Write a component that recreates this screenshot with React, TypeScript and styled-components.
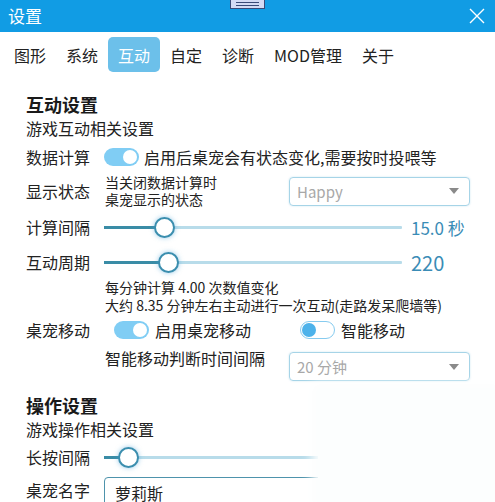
import React from "react";
import styled, { createGlobalStyle } from "styled-components";

const Global = createGlobalStyle`
  html, body { margin: 0; padding: 0; background: #fff; }
  body { font-family: "Noto Sans CJK SC", "Noto Sans", sans-serif; color: #222; }
  * { box-sizing: border-box; }
`;

const Window = styled.div`
  position: relative;
  width: 495px;
  height: 502px;
  overflow: hidden;
  background: #fff;
`;

const TitleBar = styled.div`
  position: relative;
  height: 32px;
  background: #119ce4;
  display: flex;
  align-items: center;
  justify-content: space-between;
  padding: 0 10px 0 8px;
`;

const Title = styled.div`
  color: #fff;
  font-size: 17px;
  line-height: 20px;
`;

const DragHandle = styled.div`
  position: absolute;
  left: 230px;
  top: -1px;
  width: 35px;
  height: 10px;
  background: #d4daf4;
  border: 1px solid #3b4a78;
  display: flex;
  flex-direction: column;
  justify-content: center;
  gap: 2px;
  padding: 0 5px;
  &::before, &::after {
    content: "";
    display: block;
    height: 1px;
    background: #3b4a78;
  }
`;

const TabBar = styled.div`
  height: 44px;
  display: flex;
  align-items: flex-start;
  padding: 5px 0 0 4px;
`;

const Tab = styled.div<{ $active?: boolean }>`
  height: 35px;
  padding: 0 10px;
  display: flex;
  align-items: center;
  font-size: 16px;
  border-radius: 5px;
  color: ${(p) => (p.$active ? "#fff" : "#222")};
  background: ${(p) => (p.$active ? "#6cc0ea" : "transparent")};
`;

const Content = styled.div`
  padding: 0 25px 0 26px;
  display: flex;
  flex-direction: column;
`;

const Heading = styled.div<{ $mt: number }>`
  margin-top: ${(p) => p.$mt}px;
  font-size: 18px;
  line-height: 24px;
  font-weight: 700;
  color: #1a1a1a;
`;

const SubHeading = styled.div`
  font-size: 16px;
  line-height: 24px;
  color: #222;
`;

const Row = styled.div<{ $h: number; $top?: boolean }>`
  height: ${(p) => p.$h}px;
  display: flex;
  align-items: ${(p) => (p.$top ? "flex-start" : "center")};
`;

const Label = styled.div`
  width: 78px;
  flex: none;
  font-size: 16px;
  line-height: 24px;
`;

const Text = styled.span<{ $ml?: number }>`
  margin-left: ${(p) => p.$ml ?? 5}px;
  font-size: 16px;
  line-height: 24px;
  white-space: nowrap;
`;

const Desc = styled.div<{ $ml?: number }>`
  margin-left: ${(p) => p.$ml ?? 1}px;
  font-size: 14px;
  line-height: 17px;
  white-space: nowrap;
`;

const Info = styled.div`
  margin-left: 79px;
  font-size: 14px;
  line-height: 18px;
  white-space: nowrap;
`;

const ToggleTrack = styled.div<{ $on: boolean; $ml?: number }>`
  position: relative;
  margin-left: ${(p) => p.$ml ?? 0}px;
  width: 35px;
  height: 18px;
  flex: none;
  border-radius: 9px;
  background: ${(p) => (p.$on ? "#80cdf4" : "#fff")};
  border: ${(p) => (p.$on ? "none" : "1.5px solid #86cbef")};
`;

const ToggleKnob = styled.div<{ $on: boolean }>`
  position: absolute;
  top: 50%;
  transform: translateY(-50%);
  width: 14px;
  height: 14px;
  border-radius: 50%;
  ${(p) => (p.$on ? "right: 2px; background: #fff;" : "left: 1px; background: #4db2ea;")}
`;

const Toggle = ({ on, ml }: { on: boolean; ml?: number }) => (
  <ToggleTrack $on={on} $ml={ml}>
    <ToggleKnob $on={on} />
  </ToggleTrack>
);

const SelectBox = styled.div<{ $mt?: number }>`
  margin-left: auto;
  margin-top: ${(p) => p.$mt ?? 0}px;
  width: 181px;
  height: 29px;
  flex: none;
  border: 1.5px solid #a6d4e7;
  border-radius: 4px;
  box-shadow: 0 0 2px rgba(120, 190, 220, 0.4);
  display: flex;
  align-items: center;
  justify-content: space-between;
  padding: 0 10px 0 7px;
  font-size: 15px;
  color: #a8a8a8;
`;

const Caret = styled.div`
  width: 0;
  height: 0;
  border-left: 5px solid transparent;
  border-right: 5px solid transparent;
  border-top: 6px solid #8a8a8a;
`;

const SliderWrap = styled.div<{ $w: number }>`
  position: relative;
  width: ${(p) => p.$w}px;
  height: 24px;
  flex: none;
`;

const TrackBase = styled.div`
  position: absolute;
  left: 0;
  right: 0;
  top: 11px;
  height: 2.5px;
  background: #b8dcea;
  border-radius: 1px;
`;

const TrackFill = styled.div`
  position: absolute;
  left: 0;
  top: 11px;
  height: 2.5px;
  background: #3a8ca6;
`;

const Thumb = styled.div`
  position: absolute;
  top: 2px;
  width: 21px;
  height: 21px;
  margin-left: -10.5px;
  border-radius: 50%;
  background: #fff;
  border: 2.5px solid #3b8eae;
  box-shadow: 0 0 5px rgba(70, 160, 215, 0.55);
`;

const Value = styled.span<{ $size: number }>`
  margin-left: 9px;
  font-size: ${(p) => p.$size}px;
  color: #3a8cb6;
  white-space: nowrap;
`;

const Slider = ({ pos, width }: { pos: number; width: number }) => (
  <SliderWrap $w={width}>
    <TrackBase />
    <TrackFill style={{ width: pos }} />
    <Thumb style={{ left: pos }} />
  </SliderWrap>
);

const InputBox = styled.div`
  margin-top: 4px;
  width: 260px;
  height: 32px;
  flex: none;
  border: 1.5px solid #4e93ac;
  border-radius: 4px;
  display: flex;
  align-items: center;
  padding-left: 10px;
  font-size: 16px;
`;

const Cover = styled.div`
  position: absolute;
  left: 318px;
  top: 390px;
  right: 0;
  bottom: 0;
  background: #fcfefe;
  box-shadow: 0 0 10px 6px #fcfefe;
`;

export default function App() {
  const tabs = ["图形", "系统", "互动", "自定", "诊断", "MOD管理", "关于"];
  return (
    <Window>
      <Global />
      <TitleBar>
        <Title>设置</Title>
        <svg width="16" height="16" viewBox="0 0 16 16">
          <path d="M1 1 L15 15 M15 1 L1 15" stroke="#fff" strokeWidth="1.4" fill="none" />
        </svg>
        <DragHandle />
      </TitleBar>
      <TabBar>
        {tabs.map((t) => (
          <Tab key={t} $active={t === "互动"}>
            {t}
          </Tab>
        ))}
      </TabBar>
      <Content>
        <Heading $mt={16}>互动设置</Heading>
        <SubHeading>游戏互动相关设置</SubHeading>
        <Row $h={34}>
          <Label>数据计算</Label>
          <Toggle on />
          <Text>启用后桌宠会有状态变化,需要按时投喂等</Text>
        </Row>
        <Row $h={34}>
          <Label>显示状态</Label>
          <Desc>
            当关闭数据计算时
            <br />
            桌宠显示的状态
          </Desc>
          <SelectBox>
            Happy
            <Caret />
          </SelectBox>
        </Row>
        <Row $h={38}>
          <Label>计算间隔</Label>
          <Slider pos={60} width={298} />
          <Value $size={17}>15.0 秒</Value>
        </Row>
        <Row $h={32}>
          <Label>互动周期</Label>
          <Slider pos={64} width={298} />
          <Value $size={20}>220</Value>
        </Row>
        <Info>
          每分钟计算 4.00 次数值变化
          <br />
          大约 8.35 分钟左右主动进行一次互动(走路发呆爬墙等)
        </Info>
        <Row $h={32}>
          <Label>桌宠移动</Label>
          <Toggle on ml={10} />
          <Text $ml={6}>启用桌宠移动</Text>
          <Toggle on={false} ml={49} />
          <Text $ml={6}>智能移动</Text>
        </Row>
        <Row $h={38} $top>
          <Desc $ml={79} style={{ fontSize: 16, lineHeight: "24px" }}>
            智能移动判断时间间隔
          </Desc>
          <SelectBox $mt={6}>
            20 分钟
            <Caret />
          </SelectBox>
        </Row>
        <Heading $mt={9}>操作设置</Heading>
        <SubHeading>游戏操作相关设置</SubHeading>
        <Row $h={32}>
          <Label>长按间隔</Label>
          <Slider pos={24} width={298} />
        </Row>
        <Row $h={40} $top>
          <Label style={{ marginTop: 5 }}>桌宠名字</Label>
          <InputBox>萝莉斯</InputBox>
        </Row>
      </Content>
      <Cover />
    </Window>
  );
}
